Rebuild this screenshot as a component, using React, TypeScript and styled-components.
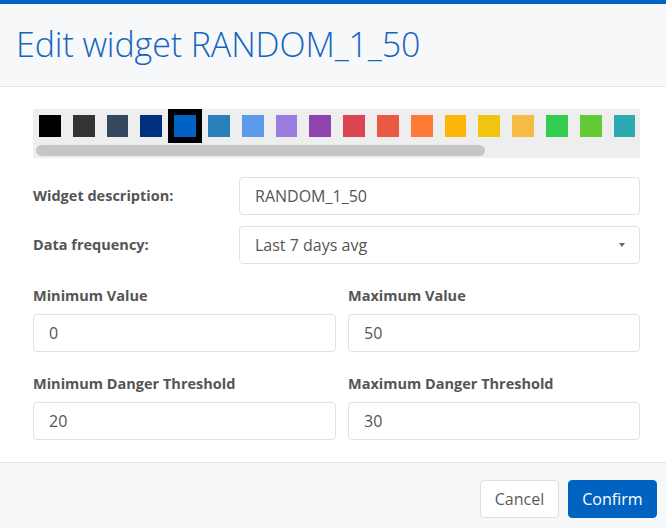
import React, { FC } from 'react'
import styled, { createGlobalStyle } from 'styled-components'

const GlobalStyle = createGlobalStyle`
	html, body {
		margin: 0;
		padding: 0;
		background: #ffffff;
		font-family: 'Open Sans', 'Noto Sans', sans-serif;
	}
	* {
		box-sizing: border-box;
	}
`

const Modal = styled.div`
	width: 666px;
	height: 528px;
	display: flex;
	flex-direction: column;
	border-top: 4px solid #0062c1;
	background: #ffffff;
	overflow: hidden;
`

const Header = styled.div`
	height: 83px;
	flex: 0 0 83px;
	background: #f7f8fa;
	border-bottom: 1px solid #e3e4e6;
	display: flex;
	align-items: center;
	padding: 0 16px 2px;
`

const Title = styled.h1`
	margin: 0;
	font-size: 34px;
	font-weight: 300;
	color: #1764c0;
	letter-spacing: -0.1px;
`

const Body = styled.div`
	flex: 1;
	padding: 22px 26px 0 33px;
`

const Palette = styled.div`
	background: #eeeeee;
	height: 49px;
	display: flex;
	flex-direction: column;
	overflow: hidden;
`

const SwatchRow = styled.div`
	display: flex;
	height: 34px;
`

const Swatch = styled.div<{ $color: string; $selected?: boolean }>`
	flex: 0 0 33.8px;
	height: 34px;
	border: 6px solid ${(p) => (p.$selected ? '#000000' : 'transparent')};
	background: ${(p) => p.$color};
	background-clip: content-box;
`

const ScrollTrack = styled.div`
	height: 15px;
	padding: 2px 3px;
`

const ScrollThumb = styled.div`
	width: 449px;
	height: 11px;
	border-radius: 6px;
	background: #c6c6c6;
`

const Fields = styled.div`
	display: flex;
	flex-direction: column;
	padding-top: 19px;
`

const InlineRow = styled.div`
	display: grid;
	grid-template-columns: 206px 1fr;
	align-items: center;
	margin-bottom: 11px;
`

const Label = styled.label`
	font-size: 14.5px;
	line-height: 20px;
	font-weight: 700;
	color: #555555;
`

const Input = styled.div`
	height: 38px;
	border: 1px solid #dfe1e4;
	border-radius: 4px;
	background: #ffffff;
	display: flex;
	align-items: center;
	padding: 0 15px;
	font-size: 16px;
	color: #555555;
	position: relative;
`

const Caret = styled.span`
	position: absolute;
	right: 14px;
	top: 16px;
	width: 0;
	height: 0;
	border-left: 3.5px solid transparent;
	border-right: 3.5px solid transparent;
	border-top: 4.5px solid #666666;
`

const Grid = styled.div`
	display: grid;
	grid-template-columns: 303px 292px;
	column-gap: 12px;
	margin-top: 11px;
`

const Stack = styled.div`
	display: flex;
	flex-direction: column;
	gap: 8px;
	margin-bottom: 22px;
`

const Footer = styled.div`
	flex: 0 0 66px;
	background: #f7f8fa;
	border-top: 1px solid #e3e4e6;
	display: flex;
	align-items: flex-start;
	justify-content: flex-end;
	gap: 9px;
	padding: 17px 9px 0 0;
`

const Button = styled.button<{ $primary?: boolean }>`
	height: 38px;
	padding: 0 13.5px;
	border-radius: 4px;
	font-family: 'Open Sans', 'Noto Sans', sans-serif;
	font-size: 16px;
	border: 1px solid ${(p) => (p.$primary ? '#0062c1' : '#dcdfe3')};
	background: ${(p) => (p.$primary ? '#0062c1' : '#ffffff')};
	color: ${(p) => (p.$primary ? '#ffffff' : '#5b5b5b')};
`

const colors = [
	'#000000', '#333333', '#34495e', '#00307f', '#0062c4', '#2980b9',
	'#5b9be9', '#9a7ddf', '#8e44ad', '#db4453', '#e85a42', '#fe7b35',
	'#ffb508', '#f1c40f', '#f5bb47', '#32cc50', '#63c934', '#2babb1',
	'#1abc9c', '#16a085', '#95a5a6', '#7f8c8d', '#bdc3c7', '#ecf0f1',
]

const App: FC = () => (
	<>
		<GlobalStyle />
		<Modal>
			<Header>
				<Title>Edit widget RANDOM_1_50</Title>
			</Header>
			<Body>
				<Palette>
					<SwatchRow>
						{colors.map((c, i) => (
							<Swatch key={c} $color={c} $selected={i === 4} />
						))}
					</SwatchRow>
					<ScrollTrack>
						<ScrollThumb />
					</ScrollTrack>
				</Palette>
				<Fields>
					<InlineRow>
						<Label>Widget description:</Label>
						<Input>RANDOM_1_50</Input>
					</InlineRow>
					<InlineRow>
						<Label>Data frequency:</Label>
						<Input>
							Last 7 days avg
							<Caret />
						</Input>
					</InlineRow>
					<Grid>
						<Stack>
							<Label>Minimum Value</Label>
							<Input>0</Input>
						</Stack>
						<Stack>
							<Label>Maximum Value</Label>
							<Input>50</Input>
						</Stack>
						<Stack>
							<Label>Minimum Danger Threshold</Label>
							<Input>20</Input>
						</Stack>
						<Stack>
							<Label>Maximum Danger Threshold</Label>
							<Input>30</Input>
						</Stack>
					</Grid>
				</Fields>
			</Body>
			<Footer>
				<Button>Cancel</Button>
				<Button $primary>Confirm</Button>
			</Footer>
		</Modal>
	</>
)

export default App
